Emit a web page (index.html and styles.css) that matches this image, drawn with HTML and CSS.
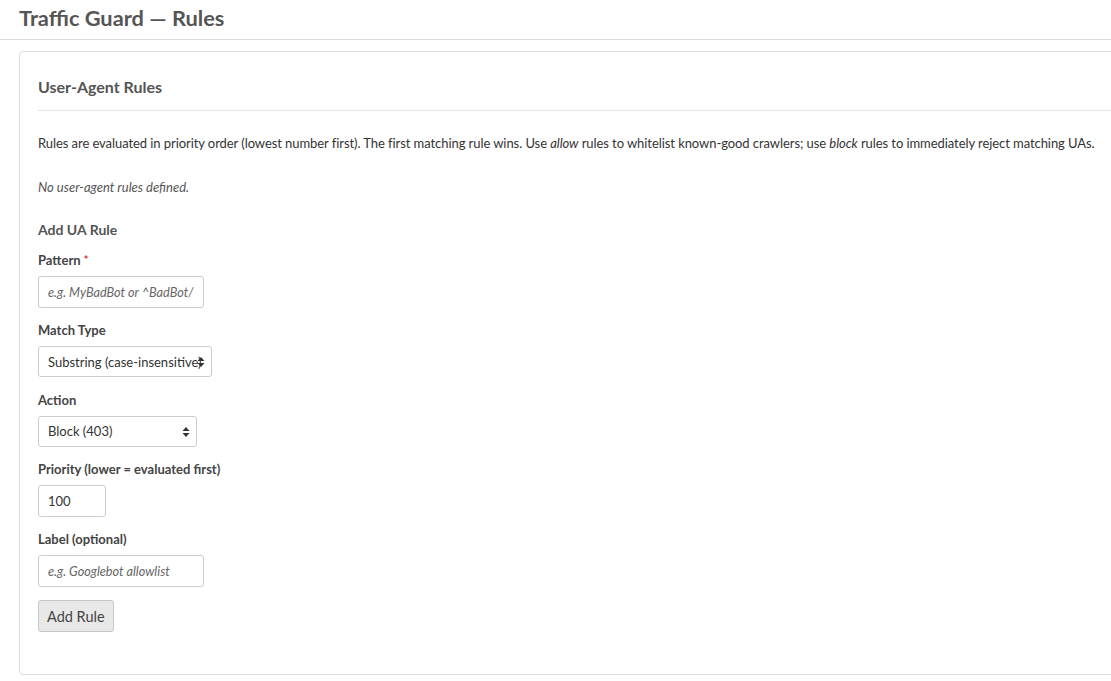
FILE: index.html
```html
<!DOCTYPE html>
<html lang="en">
<head>
    <meta charset="UTF-8">
    <meta name="viewport" content="width=device-width, initial-scale=1.0">
    <title>Traffic Guard — Rules</title>
    <link rel="stylesheet" href="styles.css">
</head>
<body>
    <div class="page-header">
        <h1>Traffic Guard — Rules</h1>
    </div>

    <div class="card">
        <h2 class="card-title">User-Agent Rules</h2>

        <p class="help">Rules are evaluated in priority order (lowest number first). The first matching rule wins. Use <em>allow</em> rules to whitelist known-good crawlers; use <em>block</em> rules to immediately reject matching UAs.</p>

        <p class="empty">No user-agent rules defined.</p>

        <h3 class="form-title">Add UA Rule</h3>

        <form id="ua-form">
            <div class="field">
                <label for="pattern">Pattern <span class="required">*</span></label>
                <input type="text" id="pattern" class="text-input" placeholder="e.g. MyBadBot or ^BadBot/">
            </div>

            <div class="field">
                <label for="match-type">Match Type</label>
                <div class="select-wrap select-match">
                    <select id="match-type">
                        <option>Substring (case-insensitive)</option>
                        <option>Exact</option>
                        <option>Regex</option>
                    </select>
                    <svg class="select-arrow" width="8" height="12" viewBox="0 0 8 12"><path d="M4 1 L7.5 5 H0.5 Z M4 11 L7.5 7 H0.5 Z" fill="#333"/></svg>
                </div>
            </div>

            <div class="field">
                <label for="action">Action</label>
                <div class="select-wrap select-action">
                    <select id="action">
                        <option>Block (403)</option>
                        <option>Allow</option>
                    </select>
                    <svg class="select-arrow" width="8" height="12" viewBox="0 0 8 12"><path d="M4 1 L7.5 5 H0.5 Z M4 11 L7.5 7 H0.5 Z" fill="#333"/></svg>
                </div>
            </div>

            <div class="field">
                <label for="priority">Priority (lower = evaluated first)</label>
                <input type="number" id="priority" class="text-input priority-input" value="100">
            </div>

            <div class="field">
                <label for="label">Label (optional)</label>
                <input type="text" id="label" class="text-input" placeholder="e.g. Googlebot allowlist">
            </div>

            <button type="submit" class="btn">Add Rule</button>
        </form>
    </div>
</body>
</html>
```

FILE: styles.css
```css
html, body {
    overflow-x: hidden;
}

body {
    margin: 0;
    font-family: Lato, "Open Sans", sans-serif;
    color: #333;
    background: #fff;
}

.page-header {
    height: 40px;
    border-bottom: 1px solid #dcdcdc;
    padding: 0 19px;
    box-sizing: border-box;
}

.page-header h1 {
    margin: 0;
    font-size: 21.8px;
    line-height: 35px;
    font-weight: bold;
    color: #555;
}

.card {
    margin: 11px -30px 6px 19px;
    border: 1px solid #dcdcdc;
    border-radius: 4px;
    padding: 25px 18px 42px;
}

.card-title {
    margin: 0;
    font-size: 16px;
    line-height: 20px;
    font-weight: bold;
    color: #555;
    padding-bottom: 13px;
    border-bottom: 1px solid #e6e6e6;
}

.help {
    font-size: 13px;
    line-height: 18px;
    letter-spacing: -0.07px;
    margin: 23px 0 0;
    color: #333;
}

.empty {
    font-size: 13px;
    line-height: 18px;
    font-style: italic;
    color: #555;
    margin: 26px 0 0;
}

.form-title {
    font-size: 14px;
    line-height: 18px;
    font-weight: bold;
    color: #555;
    margin: 25px 0 12px;
}

.field {
    margin-bottom: 13.25px;
}

.field label {
    display: block;
    font-size: 13px;
    line-height: 18px;
    font-weight: bold;
    color: #444;
    margin-bottom: 7px;
}

.required {
    color: #d33;
    font-size: 11px;
    vertical-align: top;
}

.text-input {
    display: block;
    width: 166px;
    height: 32px;
    box-sizing: border-box;
    border: 1px solid #ccc;
    border-radius: 3px;
    padding: 0 9px;
    font-family: inherit;
    font-size: 13px;
    color: #333;
    background: #fff;
}

.text-input::placeholder {
    font-style: italic;
    font-size: 12.7px;
    color: #666;
}

.priority-input {
    width: 68px;
    -moz-appearance: textfield;
}

.priority-input::-webkit-inner-spin-button,
.priority-input::-webkit-outer-spin-button {
    -webkit-appearance: none;
    margin: 0;
}

.select-wrap {
    position: relative;
    display: inline-block;
}

.select-wrap select {
    -webkit-appearance: none;
    appearance: none;
    height: 31px;
    box-sizing: border-box;
    border: 1px solid #ccc;
    border-radius: 3px;
    padding: 0 0 0 9px;
    font-family: inherit;
    font-size: 13px;
    color: #333;
    background: #fff;
}

.select-match select {
    width: 174px;
}

.select-action select {
    width: 159px;
    padding-right: 20px;
}

.select-arrow {
    position: absolute;
    right: 7px;
    top: 10px;
    pointer-events: none;
}

.btn {
    font-family: inherit;
    font-size: 14.5px;
    color: #444;
    background: #e8e8e8;
    border: 1px solid #c8c8c8;
    border-radius: 3px;
    height: 32px;
    padding: 0 8px;
    cursor: pointer;
}

.btn:hover {
    background: #ddd;
}
```
